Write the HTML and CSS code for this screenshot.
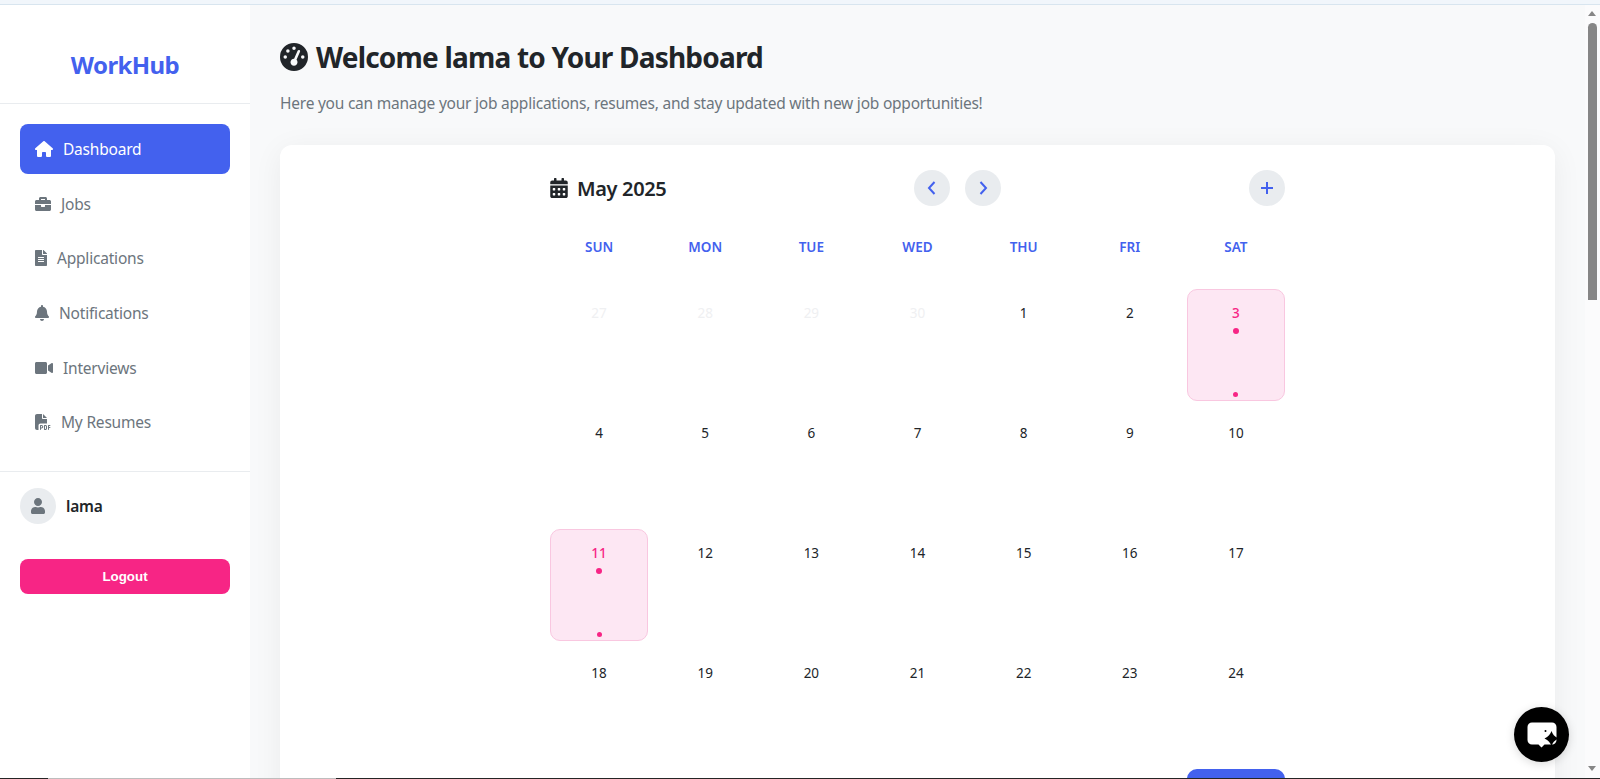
FILE: index.html

```html
<!DOCTYPE html>
<html lang="en">
<head>
  <meta charset="UTF-8" />
  <title>WorkHub Dashboard</title>
  <link rel="stylesheet" href="styles.css">
</head>
<body>
  <div class="top-strip"></div>

  <div class="app">
    <aside class="sidebar">
      <div class="logo">WorkHub</div>

      <nav class="nav">
        <a class="nav-item active">
          <svg class="nav-icon w18" viewBox="0 0 576 512"><path d="M575.8 255.5c0 18-15 32.1-32 32.1h-32l.7 160.2c0 2.7-.2 5.4-.5 8.1V472c0 22.1-17.9 40-40 40H456c-1.1 0-2.2 0-3.3-.1c-1.4 .1-2.8 .1-4.2 .1H416 392c-22.1 0-40-17.9-40-40V448 384c0-17.7-14.3-32-32-32H256c-17.7 0-32 14.3-32 32v64 24c0 22.1-17.9 40-40 40H160 128.1c-1.5 0-3-.1-4.5-.2c-1.2 .1-2.4 .2-3.6 .2H104c-22.1 0-40-17.9-40-40V360c0-.9 0-1.9 .1-2.8V287.6H32c-18 0-32-14-32-32.1c0-9 3-17 10-24L266.4 8c7-7 15-8 22-8s15 2 21 7L564.8 231.5c8 7 12 15 11 24z"/></svg>
          <span>Dashboard</span>
        </a>
        <a class="nav-item">
          <svg class="nav-icon w16" viewBox="0 0 512 512"><path d="M320 336c0 8.84-7.16 16-16 16h-96c-8.84 0-16-7.16-16-16v-48H0v144c0 25.6 22.4 48 48 48h416c25.6 0 48-22.4 48-48V288H320v48zm144-208h-80V80c0-25.6-22.4-48-48-48H176c-25.6 0-48 22.4-48 48v48H48c-25.6 0-48 22.4-48 48v80h512v-80c0-25.6-22.4-48-48-48zm-144 0H192V96h128v32z"/></svg>
          <span>Jobs</span>
        </a>
        <a class="nav-item">
          <svg class="nav-icon w12" viewBox="0 0 384 512"><path d="M224 136V0H24C10.7 0 0 10.7 0 24v464c0 13.3 10.7 24 24 24h336c13.3 0 24-10.7 24-24V160H248c-13.2 0-24-10.8-24-24zm64 236c0 6.6-5.4 12-12 12H108c-6.6 0-12-5.4-12-12v-8c0-6.6 5.4-12 12-12h168c6.6 0 12 5.4 12 12v8zm0-64c0 6.6-5.4 12-12 12H108c-6.6 0-12-5.4-12-12v-8c0-6.6 5.4-12 12-12h168c6.6 0 12 5.4 12 12v8zm0-72v8c0 6.6-5.4 12-12 12H108c-6.6 0-12-5.4-12-12v-8c0-6.6 5.4-12 12-12h168c6.6 0 12 5.4 12 12zm96-114.1v6.1H256V0h6.1c6.4 0 12.5 2.5 17 7l97.9 98c4.5 4.5 7 10.6 7 16.9z"/></svg>
          <span>Applications</span>
        </a>
        <a class="nav-item">
          <svg class="nav-icon w14" viewBox="0 0 448 512"><path d="M224 512c35.32 0 63.97-28.65 63.97-64H160.03c0 35.35 28.65 64 63.97 64zm215.39-149.71c-19.32-20.76-55.47-51.99-55.47-154.29 0-77.7-54.48-139.9-127.94-155.16V32c0-17.67-14.32-32-31.98-32s-31.98 14.33-31.98 32v20.84C118.56 68.1 64.08 130.3 64.08 208c0 102.3-36.15 133.53-55.47 154.29-6 6.45-8.66 14.16-8.61 21.71.11 16.4 12.98 32 32.1 32h383.8c19.12 0 32-15.6 32.1-32 .05-7.55-2.61-15.27-8.61-21.71z"/></svg>
          <span>Notifications</span>
        </a>
        <a class="nav-item">
          <svg class="nav-icon w18" viewBox="0 0 576 512"><path d="M336.2 64H47.8C21.4 64 0 85.4 0 111.8v288.4C0 426.6 21.4 448 47.8 448h288.4c26.4 0 47.8-21.4 47.8-47.8V111.8c0-26.4-21.4-47.8-47.8-47.8zm189.4 37.7L416 177.3v157.4l109.6 75.5c21.2 14.6 50.4-.3 50.4-25.8V127.5c0-25.4-29.1-40.4-50.4-25.8z"/></svg>
          <span>Interviews</span>
        </a>
        <a class="nav-item">
          <svg class="nav-icon w16" viewBox="0 0 512 512"><path d="M0 64C0 28.7 28.7 0 64 0H224V128c0 17.7 14.3 32 32 32H384V304H176c-35.3 0-64 28.7-64 64V512H64c-35.3 0-64-28.7-64-64V64zm384 64H256V0L384 128zM176 352h32c30.9 0 56 25.1 56 56s-25.1 56-56 56H192v32c0 8.8-7.2 16-16 16s-16-7.2-16-16V448 368c0-8.8 7.2-16 16-16zm32 80c13.3 0 24-10.7 24-24s-10.7-24-24-24H192v48h16zm96-80h32c26.5 0 48 21.5 48 48v64c0 26.5-21.5 48-48 48H304c-8.8 0-16-7.2-16-16V368c0-8.8 7.2-16 16-16zm32 128c8.8 0 16-7.2 16-16V400c0-8.8-7.2-16-16-16H320v96h16zm80-112c0-8.8 7.2-16 16-16h48c8.8 0 16 7.2 16 16s-7.2 16-16 16H448v32h32c8.8 0 16 7.2 16 16s-7.2 16-16 16H448v48c0 8.8-7.2 16-16 16s-16-7.2-16-16V432 368z"/></svg>
          <span>My Resumes</span>
        </a>
      </nav>

      <div class="user-box">
        <div class="user-row">
          <div class="avatar">
            <svg class="avatar-icon" viewBox="0 0 448 512"><path d="M224 256c70.7 0 128-57.3 128-128S294.7 0 224 0 96 57.3 96 128s57.3 128 128 128zm89.6 32h-16.7c-22.2 10.2-46.9 16-72.9 16s-50.6-5.8-72.9-16h-16.7C60.2 288 0 348.2 0 422.4V464c0 26.5 21.5 48 48 48h352c26.5 0 48-21.5 48-48v-41.6c0-74.2-60.2-134.4-134.4-134.4z"/></svg>
          </div>
          <span class="user-name">lama</span>
        </div>
        <button class="logout">Logout</button>
      </div>
    </aside>

    <main class="main">
      <h1 class="title">
        <svg class="title-icon" viewBox="0 0 512 512"><path d="M0 256a256 256 0 1 1 512 0A256 256 0 1 1 0 256zM288 96a32 32 0 1 0 -64 0 32 32 0 1 0 64 0zM256 416c35.3 0 64-28.7 64-64c0-17.4-6.9-33.1-18.1-44.6L366 161.7c5.3-12.1-.2-26.3-12.3-31.6s-26.3 .2-31.6 12.3L257.9 288c-.6 0-1.3 0-1.9 0c-35.3 0-64 28.7-64 64s28.7 64 64 64zM176 144a32 32 0 1 0 -64 0 32 32 0 1 0 64 0zM96 288a32 32 0 1 0 0-64 32 32 0 1 0 0 64zm352-32a32 32 0 1 0 -64 0 32 32 0 1 0 64 0z"/></svg>
        Welcome lama to Your Dashboard
      </h1>
      <p class="subtitle">Here you can manage your job applications, resumes, and stay updated with new job opportunities!</p>

      <section class="card">
        <div class="calendar">
          <div class="cal-header">
            <div class="cal-title">
              <svg class="cal-icon" viewBox="0 0 448 512"><path d="M0 464c0 26.5 21.5 48 48 48h352c26.5 0 48-21.5 48-48V192H0v272zm320-196c0-6.6 5.4-12 12-12h40c6.6 0 12 5.4 12 12v40c0 6.6-5.4 12-12 12h-40c-6.6 0-12-5.4-12-12v-40zm0 128c0-6.6 5.4-12 12-12h40c6.6 0 12 5.4 12 12v40c0 6.6-5.4 12-12 12h-40c-6.6 0-12-5.4-12-12v-40zM192 268c0-6.6 5.4-12 12-12h40c6.6 0 12 5.4 12 12v40c0 6.6-5.4 12-12 12h-40c-6.6 0-12-5.4-12-12v-40zm0 128c0-6.6 5.4-12 12-12h40c6.6 0 12 5.4 12 12v40c0 6.6-5.4 12-12 12h-40c-6.6 0-12-5.4-12-12v-40zM64 268c0-6.6 5.4-12 12-12h40c6.6 0 12 5.4 12 12v40c0 6.6-5.4 12-12 12H76c-6.6 0-12-5.4-12-12v-40zm0 128c0-6.6 5.4-12 12-12h40c6.6 0 12 5.4 12 12v40c0 6.6-5.4 12-12 12H76c-6.6 0-12-5.4-12-12v-40zM400 64h-48V16c0-8.8-7.2-16-16-16h-32c-8.8 0-16 7.2-16 16v48H160V16c0-8.8-7.2-16-16-16h-32c-8.8 0-16 7.2-16 16v48H48C21.5 64 0 85.5 0 112v48h448v-48c0-26.5-21.5-48-48-48z"/></svg>
              <span>May 2025</span>
            </div>
            <div class="cal-nav">
              <button class="round-btn"><svg viewBox="0 0 16 16"><path d="M10.5 2 5 8l5.500 6"/></svg></button>
              <button class="round-btn"><svg viewBox="0 0 16 16"><path d="M5.500 2 11 8l-5.500 6"/></svg></button>
            </div>
            <button class="round-btn add-btn"><svg viewBox="0 0 16 16"><path d="M8 2v12M2 8h12"/></svg></button>
          </div>

          <div class="cal-grid weekdays">
            <div>SUN</div><div>MON</div><div>TUE</div><div>WED</div><div>THU</div><div>FRI</div><div>SAT</div>
          </div>

          <div class="cal-grid days">
            <div class="day muted"><span>27</span></div>
            <div class="day muted"><span>28</span></div>
            <div class="day muted"><span>29</span></div>
            <div class="day muted"><span>30</span></div>
            <div class="day"><span>1</span></div>
            <div class="day"><span>2</span></div>
            <div class="day event"><span>3</span><i class="dot"></i><i class="dot small"></i></div>

            <div class="day"><span>4</span></div>
            <div class="day"><span>5</span></div>
            <div class="day"><span>6</span></div>
            <div class="day"><span>7</span></div>
            <div class="day"><span>8</span></div>
            <div class="day"><span>9</span></div>
            <div class="day"><span>10</span></div>

            <div class="day event"><span>11</span><i class="dot"></i><i class="dot small"></i></div>
            <div class="day"><span>12</span></div>
            <div class="day"><span>13</span></div>
            <div class="day"><span>14</span></div>
            <div class="day"><span>15</span></div>
            <div class="day"><span>16</span></div>
            <div class="day"><span>17</span></div>

            <div class="day"><span>18</span></div>
            <div class="day"><span>19</span></div>
            <div class="day"><span>20</span></div>
            <div class="day"><span>21</span></div>
            <div class="day"><span>22</span></div>
            <div class="day"><span>23</span></div>
            <div class="day"><span>24</span></div>

            <!-- last row runs under the fold, only the today box shows -->
            <div class="day"></div>
            <div class="day"></div>
            <div class="day"></div>
            <div class="day"></div>
            <div class="day"></div>
            <div class="day"></div>
            <div class="day today"></div>
          </div>
        </div>
      </section>
    </main>

    <div class="scrollbar">
      <div class="arrow-up"></div>
      <div class="thumb"></div>
      <div class="arrow-down"></div>
    </div>
  </div>

  <div class="bottom-strip"><div class="bottom-seg"></div></div>

  <button class="chat-fab">
    <svg viewBox="0 0 32 32">
      <path class="bubble" d="M6 3.5h20A4.500 4.500 0 0 1 30.500 8v13a4.500 4.500 0 0 1-4.500 4.500h-7.500l-3 3-3-3H6A4.500 4.500 0 0 1 1.500 21V8A4.500 4.500 0 0 1 6 3.500z"/>
      <path class="spark" d="M25.500 12c1.200 3.500 3 5.500 7 7.500-4 2-5.800 4-7 7.500-1.200-3.500-3-5.500-7-7.500 4-2 5.800-4 7-7.500z"/>
      <circle class="spark" cx="19.500" cy="12" r="1"/>
    </svg>
  </button>
</body>
</html>
```

FILE: styles.css

```css
* {
  box-sizing: border-box;
}

html, body {
  height: 100%;
}

body {
  margin: 0;
  display: flex;
  flex-direction: column;
  overflow: hidden;
  font-family: "Noto Sans", "Open Sans", Arial, sans-serif;
  color: #212529;
  background-color: #f8f9fa;
}

.top-strip {
  height: 5px;
  flex-shrink: 0;
  background-color: #f1f6fb;
  border-bottom: 1px solid #d8e5ef;
}

.bottom-strip {
  height: 1px;
  flex-shrink: 0;
  background-color: #252525;
  padding-left: 48px;
}

.bottom-seg {
  width: 288px;
  height: 1px;
  background-color: #bdbdbd;
}

.app {
  flex: 1;
  min-height: 0;
  display: flex;
}

/* sidebar */
.sidebar {
  width: 250px;
  flex-shrink: 0;
  background-color: #ffffff;
}

.logo {
  height: 99px;
  padding-top: 39px;
  text-align: center;
  font-size: 24px;
  line-height: 42px;
  font-weight: 700;
  letter-spacing: -0.6px;
  color: #4361ee;
  border-bottom: 1px solid #e9ecef;
}

.nav {
  padding: 20px 20px 0;
  display: flex;
  flex-direction: column;
  gap: 4.7px;
}

.nav-item {
  height: 50px;
  padding: 0 15px;
  display: flex;
  align-items: center;
  gap: 10px;
  border-radius: 8px;
  font-size: 15.5px;
  letter-spacing: -0.2px;
  color: #6c757d;
}

.nav-item.active {
  background-color: #4361ee;
  color: #ffffff;
}

.nav-icon {
  height: 16px;
  flex-shrink: 0;
  fill: currentColor;
}

.w12 { width: 12px; }
.w14 { width: 14px; }
.w16 { width: 16px; }
.w18 { width: 18px; }

.user-box {
  margin-top: 23.5px;
  padding: 16px 20px 0;
  border-top: 1px solid #e9ecef;
}

.user-row {
  display: flex;
  align-items: center;
  gap: 10px;
}

.avatar {
  width: 36px;
  height: 36px;
  border-radius: 50%;
  background-color: #e9ecef;
  display: flex;
  align-items: center;
  justify-content: center;
}

.avatar-icon {
  width: 14px;
  height: 16px;
  fill: #6c757d;
}

.user-name {
  font-size: 15.5px;
  font-weight: 600;
  letter-spacing: -0.2px;
}

.logout {
  display: block;
  width: 100%;
  height: 35px;
  margin-top: 35px;
  border: none;
  border-radius: 8px;
  background-color: #f72585;
  color: #ffffff;
  font-family: "Liberation Sans", Arial, sans-serif;
  font-size: 13.33px;
  font-weight: 700;
}

/* main */
.main {
  flex: 1;
  min-width: 0;
  overflow: hidden;
  padding: 0 30px;
}

.title {
  margin: 32px 0 0;
  display: flex;
  align-items: center;
  gap: 8px;
  font-size: 28px;
  line-height: 40px;
  font-weight: 700;
  letter-spacing: -0.8px;
}

.title-icon {
  width: 28px;
  height: 28px;
  fill: #212529;
}

.subtitle {
  margin: 14px 0 0;
  font-size: 15.5px;
  line-height: 24px;
  letter-spacing: -0.23px;
  color: #6c757d;
}

.card {
  margin-top: 30px;
  padding: 25px 0 0;
  height: 700px;
  background-color: #ffffff;
  border-radius: 12px;
  box-shadow: 0 5px 30px rgba(0,0,0,0.06);
}

.calendar {
  width: 735px;
  margin: 0 auto;
}

.cal-header {
  display: flex;
  align-items: center;
  margin-bottom: 31px;
}

.cal-title {
  width: 364px;
  display: flex;
  align-items: center;
  gap: 9px;
  font-size: 20px;
  font-weight: 600;
  letter-spacing: -0.35px;
}

.cal-icon {
  width: 18px;
  height: 20px;
  fill: #212529;
}

.cal-nav {
  display: flex;
  gap: 15px;
}

.round-btn {
  width: 36px;
  height: 36px;
  padding: 0;
  border: none;
  border-radius: 50%;
  background-color: #e9ecef;
  display: flex;
  align-items: center;
  justify-content: center;
}

.round-btn svg {
  width: 16px;
  height: 16px;
  fill: none;
  stroke: #4361ee;
  stroke-width: 2;
}

.add-btn {
  margin-left: auto;
}

.cal-grid {
  display: grid;
  grid-template-columns: repeat(7, 1fr);
  gap: 8px;
}

.weekdays {
  margin-bottom: 32px;
  text-align: center;
  font-size: 13.5px;
  line-height: 20px;
  font-weight: 600;
  color: #4361ee;
}

.day {
  height: 112px;
  padding-top: 13px;
  display: flex;
  flex-direction: column;
  align-items: center;
  border: 1px solid transparent;
  border-radius: 10px;
  font-size: 13.5px;
  line-height: 20px;
}

.day.muted {
  color: #eff0f2;
}

.day.event {
  background-color: #fde7f3;
  border-color: #f9c7e0;
  color: #f72585;
  font-weight: 500;
}

.day.today {
  background-color: #4361ee;
  color: #ffffff;
}

.dot {
  width: 6px;
  height: 6px;
  margin-top: 5px;
  border-radius: 50%;
  background-color: #f72585;
}

.dot.small {
  width: 5px;
  height: 5px;
  margin-top: auto;
  margin-bottom: 3px;
}

/* fake browser scrollbar */
.scrollbar {
  width: 15px;
  flex-shrink: 0;
  position: relative;
  background-color: #fbfbfc;
}

.thumb {
  width: 9px;
  height: 277px;
  margin: 7px 0 0 3px;
  border-radius: 5px 5px 0 0;
  background-color: #868686;
}

.arrow-up, .arrow-down {
  width: 0;
  margin-left: 3px;
  border-left: 4.5px solid transparent;
  border-right: 4.5px solid transparent;
}

.arrow-up {
  margin-top: 6px;
  border-bottom: 5px solid #868686;
}

.arrow-down {
  position: absolute;
  bottom: 7px;
  border-top: 5px solid #868686;
}

/* chat button */
.chat-fab {
  position: fixed;
  left: 1514px;
  top: 707px;
  width: 55px;
  height: 55px;
  padding: 0;
  border: none;
  border-radius: 50%;
  background-color: #000000;
  box-shadow: 0 2px 10px rgba(0,0,0,0.15);
  display: flex;
  align-items: center;
  justify-content: center;
}

.chat-fab svg {
  width: 32px;
  height: 32px;
}

.bubble { fill: #ffffff; }
.spark { fill: #000000; }
```
